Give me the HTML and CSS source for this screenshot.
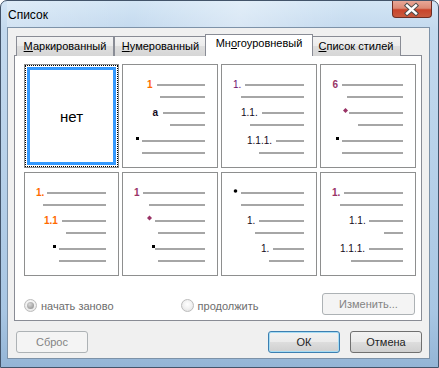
FILE: index.html
```html
<!DOCTYPE html>
<html lang="ru">
<head>
<meta charset="utf-8">
<title>Список</title>
<link rel="stylesheet" href="styles.css">
</head>
<body>
<div class="window">
  <div class="titlebar">
    <span class="title">Список</span>
    <div class="close">
      <svg width="40" height="17" viewBox="0 0 40 17">
        <path d="M15.5 4.5 L24.5 12.5 M24.5 4.5 L15.5 12.5" stroke="#4a4a4a" stroke-width="4.6" stroke-linecap="square"/>
        <path d="M15.5 4.5 L24.5 12.5 M24.5 4.5 L15.5 12.5" stroke="#ffffff" stroke-width="2.6" stroke-linecap="square"/>
      </svg>
    </div>
  </div>
  <div class="client">
    <div class="tabs">
      <div class="tab t1"><u>М</u>аркированный</div>
      <div class="tab t2"><u>Н</u>умерованный</div>
      <div class="tab t3 active">Мн<u>о</u>гоуровневый</div>
      <div class="tab t4"><u>С</u>писок стилей</div>
    </div>
    <div class="panel">
      <div class="grid">
        <div class="cell selected"><div class="focus"><span class="none">нет</span></div></div>
        <div class="cell">
          <svg class="pv" width="94" height="102" viewBox="1 1 94 102">
            <text x="25" y="24" class="orange b">1</text>
            <rect x="35" y="20" width="48" height="2"/>
            <rect x="38" y="32" width="45" height="2"/>
            <text x="30.5" y="52" class="dark b">a</text>
            <rect x="41" y="48" width="42" height="2"/>
            <rect x="48" y="60" width="35" height="2"/>
            <rect x="14" y="73" width="3" height="3" class="blk"/>
            <rect x="20" y="76" width="63" height="2"/>
            <rect x="20" y="88" width="63" height="2"/>
          </svg>
        </div>
        <div class="cell">
          <svg class="pv" width="94" height="102" viewBox="1 1 94 102">
            <text x="12" y="24" class="purple">1.</text>
            <rect x="24" y="20" width="59" height="2"/>
            <rect x="20" y="32" width="63" height="2"/>
            <text x="20" y="52" class="dark">1.1.</text>
            <rect x="41" y="48" width="42" height="2"/>
            <rect x="29" y="60" width="54" height="2"/>
            <text x="26" y="80" class="dark">1.1.1.</text>
            <rect x="55" y="76" width="28" height="2"/>
            <rect x="38" y="88" width="45" height="2"/>
          </svg>
        </div>
        <div class="cell">
          <svg class="pv" width="94" height="102" viewBox="1 1 94 102">
            <text x="12.5" y="24" class="plum b">6</text>
            <rect x="22" y="20" width="61" height="2"/>
            <rect x="27" y="32" width="56" height="2"/>
            <polygon points="25.5,44 28,46.5 25.5,49 23,46.5" class="plumf"/>
            <rect x="29" y="48" width="54" height="2"/>
            <rect x="38" y="60" width="45" height="2"/>
            <rect x="16" y="73" width="3" height="3" class="blk"/>
            <rect x="22" y="76" width="61" height="2"/>
            <rect x="22" y="88" width="61" height="2"/>
          </svg>
        </div>
        <div class="cell">
          <svg class="pv" width="93" height="102" viewBox="1 1 93 102">
            <text x="12" y="24" class="orange b">1.</text>
            <rect x="23" y="20" width="59" height="2"/>
            <rect x="19" y="32" width="63" height="2"/>
            <text x="20" y="52" class="orange b">1.1</text>
            <rect x="38" y="48" width="44" height="2"/>
            <rect x="42" y="60" width="40" height="2"/>
            <rect x="29" y="73" width="3" height="3" class="blk"/>
            <rect x="35" y="76" width="47" height="2"/>
            <rect x="35" y="88" width="47" height="2"/>
          </svg>
        </div>
        <div class="cell">
          <svg class="pv" width="94" height="102" viewBox="1 1 94 102">
            <text x="12" y="24" class="plum b">1</text>
            <rect x="21" y="20" width="62" height="2"/>
            <rect x="27" y="32" width="56" height="2"/>
            <polygon points="27.5,43.5 30,46 27.5,48.5 25,46" class="plumf"/>
            <rect x="33" y="48" width="50" height="2"/>
            <rect x="36" y="60" width="47" height="2"/>
            <rect x="30" y="73" width="3" height="3" class="blk"/>
            <rect x="33" y="76" width="50" height="2"/>
            <rect x="36" y="88" width="47" height="2"/>
          </svg>
        </div>
        <div class="cell">
          <svg class="pv" width="94" height="102" viewBox="1 1 94 102">
            <circle cx="14.5" cy="19" r="1.8" class="blk"/>
            <rect x="20" y="20" width="63" height="2"/>
            <rect x="20" y="32" width="63" height="2"/>
            <text x="26" y="52" class="dark">1.</text>
            <rect x="38" y="48" width="45" height="2"/>
            <rect x="34" y="60" width="49" height="2"/>
            <text x="40" y="80" class="dark">1.</text>
            <rect x="52" y="76" width="31" height="2"/>
            <rect x="48" y="88" width="35" height="2"/>
          </svg>
        </div>
        <div class="cell">
          <svg class="pv" width="94" height="102" viewBox="1 1 94 102">
            <text x="12" y="24" class="plum b">1.</text>
            <rect x="24" y="20" width="59" height="2"/>
            <rect x="20" y="32" width="63" height="2"/>
            <text x="29" y="52" class="dark">1.1.</text>
            <rect x="49" y="48" width="34" height="2"/>
            <rect x="64" y="60" width="19" height="2"/>
            <text x="20" y="80" class="dark">1.1.1.</text>
            <rect x="49" y="76" width="34" height="2"/>
            <rect x="31" y="88" width="52" height="2"/>
          </svg>
        </div>
      </div>
      <div class="options">
        <div class="radio checked"><span class="dot"></span><span>начать заново</span></div>
        <div class="radio"><span class="dot"></span><span>продолжить</span></div>
        <button class="btn wide" disabled>Изменить...</button>
      </div>
    </div>
    <div class="footer">
      <button class="btn" disabled>Сброс</button>
      <span class="spacer"></span>
      <button class="btn default">ОК</button>
      <button class="btn">Отмена</button>
    </div>
  </div>
</div>
</body>
</html>
```
FILE: styles.css
```css
* { box-sizing: border-box; }
html, body { margin: 0; padding: 0; background: #ffffff; }
body { font-family: "Liberation Sans", Arial, sans-serif; font-size: 11px; color: #000; }

.window {
  width: 439px;
  height: 368px;
  border: 1px solid #43546a;
  border-radius: 7px 7px 0 0;
  background: linear-gradient(180deg, #d3e5f5 0%, #c3d9ee 8%, #b9d2ea 40%, #a8c6e3 85%, #94b5d6 100%);
  padding: 0 8px 8px 6px;
  display: flex;
  flex-direction: column;
}

.titlebar {
  height: 26px;
  display: flex;
  align-items: flex-start;
  justify-content: space-between;
  background: linear-gradient(100deg, rgba(255,255,255,0.25) 0%, rgba(255,255,255,0) 30%, rgba(255,255,255,0.35) 55%, rgba(255,255,255,0) 80%);
}
.title {
  font-size: 12px;
  margin: 7px 0 0 1px;
  color: #000;
}
.close {
  width: 40px;
  height: 17px;
  margin-right: -2px;
  border: 1px solid #6e2d23;
  border-top: none;
  border-radius: 0 0 4px 4px;
  background: linear-gradient(180deg, #e8a797 0%, #dc8a76 45%, #c9442b 55%, #c85a3e 100%);
  display: flex;
}
.close svg { display: block; margin-left: -1px; }

.client {
  flex: 1;
  border: 1px solid #7d92a8;
  background: #f0f0f0;
  display: flex;
  flex-direction: column;
}

.tabs {
  display: flex;
  align-items: flex-end;
  margin: 6px 0 0 8px;
  height: 22px;
  position: relative;
  z-index: 1;
}
.tab {
  height: 20px;
  padding-top: 3px;
  text-align: center;
  border: 1px solid #898c95;
  border-bottom: none;
  background: linear-gradient(180deg, #f3f3f3 0%, #ebebeb 50%, #dedede 50%, #d6d6d6 100%);
  white-space: nowrap;
}
.t1 { width: 98px; }
.t2 { width: 93px; }
.t3 { width: 108px; }
.t4 { width: 90px; }
.tab.active {
  height: 22px;
  margin: 0 -2px;
  padding-top: 2px;
  background: #ffffff;
  position: relative;
  z-index: 2;
}

.panel {
  margin: -1px 7px 0 6px;
  height: 266px;
  border: 1px solid #898c95;
  background: #ffffff;
  padding: 8px 0 0 9px;
  display: flex;
  flex-direction: column;
}

.grid {
  display: grid;
  grid-template-columns: 95px 96px 96px 96px;
  grid-template-rows: 104px 104px;
  column-gap: 3px;
  row-gap: 4px;
}
.cell {
  border: 1px solid #8e8f8f;
  background: #ffffff;
}
.cell .pv { display: block; }
.pv rect { fill: #a6a6a6; }
.pv rect.blk, .pv .blk { fill: #000; }
.pv text { font-family: "Liberation Sans", Arial, sans-serif; font-size: 10px; }
.pv .b { font-weight: bold; }
.pv .orange { fill: #ff6a00; }
.pv .purple { fill: #6e0a6e; }
.pv .plum { fill: #993366; }
.pv .plumf { fill: #993366; }
.pv .dark { fill: #140a1c; }

.cell.selected { padding: 0; }
.focus {
  width: 100%;
  height: 100%;
  border: 1px dotted #000;
  display: flex;
}
.focus .none {
  flex: 1;
  margin: 1px;
  border: 3px solid #3399ff;
  display: flex;
  align-items: center;
  justify-content: center;
  font-size: 15px;
}

.options {
  display: flex;
  align-items: center;
  margin-top: 16px;
  height: 23px;
}
.radio {
  display: flex;
  align-items: center;
  color: #6d6d6d;
  gap: 4px;
  padding-top: 4px;
}
.radio + .radio { margin-left: 67px; }
.dot {
  width: 13px;
  height: 13px;
  border-radius: 50%;
  border: 1px solid #bcbcbc;
  background: radial-gradient(circle at 50% 40%, #ffffff 0%, #f1f1f1 50%, #dcdcdc 100%);
  display: flex;
  align-items: center;
  justify-content: center;
}
.radio.checked .dot::after {
  content: "";
  width: 7px;
  height: 7px;
  border-radius: 50%;
  background: radial-gradient(circle at 40% 35%, #d8d8d8 0%, #9e9e9e 70%, #8a8a8a 100%);
}
.options .btn.wide { margin-left: auto; margin-right: 6px; width: 93px; }

.btn {
  width: 72px;
  height: 22px;
  border: 1px solid #707070;
  border-radius: 3px;
  background: linear-gradient(180deg, #f2f2f2 0%, #ebebeb 48%, #dddddd 52%, #cfcfcf 100%);
  font-family: "Liberation Sans", Arial, sans-serif;
  font-size: 11px;
  font-weight: normal;
  color: #1e1e1e;
  padding: 0;
}
.btn:disabled {
  border-color: #adb2b5;
  background: #f4f4f4;
  color: #838383;
}
.btn.default {
  border-color: #3c7fb1;
  box-shadow: inset 0 0 0 1px #a6dcf4;
}

.footer {
  display: flex;
  align-items: center;
  margin: 10px 7px 0 8px;
}
.spacer { flex: 1; }
.footer .btn + .btn { margin-left: 10px; }
```
